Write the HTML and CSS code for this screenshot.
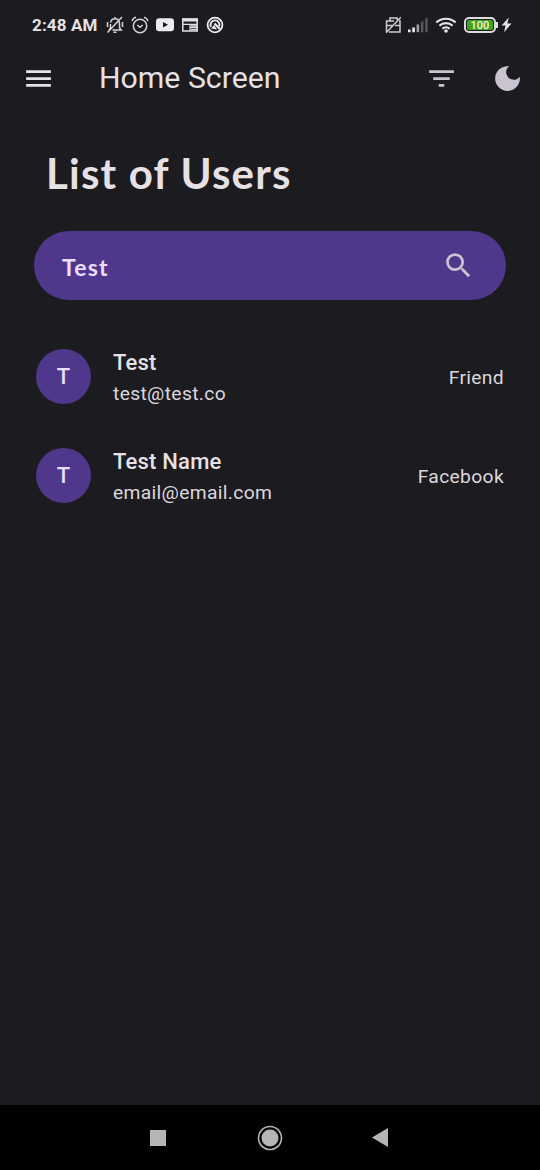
FILE: index.html
```html
<!DOCTYPE html>
<html lang="en">
<head>
<meta charset="utf-8">
<title>Home Screen</title>
<link rel="stylesheet" href="styles.css">
</head>
<body>
<div class="screen">
  <header class="status">
    <span class="clock">2:48 AM</span>
    <div class="notifications">
      <svg width="18" height="18" viewBox="0 0 18 18" fill="none" stroke="#d6d4d8" stroke-width="1.5"><path d="M4.500 6.500C5 4 7 2.700 9 2.700s4.500 1.300 4.500 5v4l1.700 2.300H6.500M4.500 8v4L3 14M9 1v2M7.500 16.200h3M16 1L1.500 16.500M1.500 6v5M16.500 6v5"/></svg>
      <svg width="18" height="18" viewBox="0 0 18 18" fill="none" stroke="#d6d4d8" stroke-width="1.5"><circle cx="9" cy="10" r="6.7"/><path d="M1 5q1-3 4-3.700M17 5q-1-3-4-3.700M6.300 9L9 11.300 11.700 9"/></svg>
      <svg width="18" height="18" viewBox="0 0 18 18"><rect y="2.3" width="18" height="13" rx="3.2" fill="#ecebed"/><path d="M7 6v5.600l5-2.800z" fill="#1c1b1f"/></svg>
      <svg class="news" width="16" height="18" viewBox="0 0 16 18" fill="none" stroke="#e4e2e6"><rect x=".8" y="3" width="14.4" height="12" stroke-width="1.5"/><path d="M0 4h16" stroke-width="3"/><path d="M1 8.300h14M8 8v7M8 11.700h7M9 13.500h6" stroke-width="1.2"/><path d="M9 10h6" stroke-width="1.5"/></svg>
      <svg width="18" height="18" viewBox="0 0 18 18" fill="none" stroke="#efedf0"><circle cx="9" cy="9" r="7.4" stroke-width="1.8"/><path d="M5 11A4.500 4.500 0 1 1 13.200 10.500" stroke-width="1.900"/><path d="M8.500 7.500l5.300 5.500" stroke-width="2.2"/><path d="M5 12.500l3-3.500 3 4.500z" fill="#efedf0" stroke="none"/></svg>
    </div>
    <div class="system">
      <svg width="17" height="18" viewBox="0 0 17 18" fill="none" stroke="#cfcdd1" stroke-width="1.5"><path d="M9 5H1.500v11M4 16h11V5h-1M5 5V2h7v2M2 9.500h6M10 9.500h5M15.800 1.200L1.200 16.800"/></svg>
      <svg width="20" height="18" viewBox="0 0 20 18"><path d="M0 13.500h2.600v2.700H0zM4.300 11.500h2.600v4.700H4.300z" fill="#eeecef"/><path d="M8.600 8.500h2.500v7.700H8.600z" fill="#a3a2a5"/><path d="M12.900 5.500h2.500v10.700h-2.500zM17.200 2.300h2.500v13.900h-2.500z" fill="#57565a"/></svg>
      <svg class="wifi" width="22" height="18" viewBox="0 0 22 18" fill="none" stroke="#e8e6ea" stroke-width="2.1"><path d="M1.300 6.600a14 14 0 0 1 19.400 0M4.400 9.800a9.600 9.600 0 0 1 13.200 0M7.400 12.800a5.200 5.200 0 0 1 7.200 0"/><circle cx="11" cy="15" r="1.8" fill="#e8e6ea" stroke="none"/></svg>
      <div class="battery"><span class="level">100</span></div>
      <svg class="bolt" width="11" height="18" viewBox="0 0 11 18"><path d="M7.800 1.500L.6 9.600h4L3 16.200 10.500 7.400H6.300z" fill="#e8e6ea"/></svg>
    </div>
  </header>

  <div class="appbar">
    <svg width="33" height="33" viewBox="0 0 24 24" fill="#e6e1e5"><path d="M3 18h18v-2H3v2zm0-5h18v-2H3v2zm0-7v2h18V6H3z"/></svg>
    <h1 class="title">Home Screen</h1>
    <svg class="filter" width="33" height="33" viewBox="0 0 24 24" fill="#cac4d0"><path d="M10 18h4v-2h-4v2zM3 6v2h18V6H3zm3 7h12v-2H6v2z"/></svg>
    <svg width="33" height="33" viewBox="0 0 24 24" fill="#cac4d0"><path d="M12 3a9 9 0 1 0 9 9c0-.46-.04-.92-.1-1.36a5.389 5.389 0 0 1-4.4 2.26 5.403 5.403 0 0 1-3.14-9.8c-.44-.06-.9-.1-1.36-.1z"/></svg>
  </div>

  <main class="content">
    <h2 class="heading">List of Users</h2>
    <div class="search">
      <span class="query">Test</span>
      <svg width="33" height="33" viewBox="0 0 24 24" fill="#cac4d0"><path d="M15.5 14h-.79l-.28-.27A6.471 6.471 0 0 0 16 9.500 6.500 6.500 0 1 0 9.500 16c1.610 0 3.090-.59 4.230-1.570l.27.28v.79l5 4.990L20.490 19l-4.990-5zm-6 0C7.010 14 5 11.990 5 9.500S7.010 5 9.500 5 14 7.010 14 9.500 11.990 14 9.500 14z"/></svg>
    </div>
    <ul class="users">
      <li class="user">
        <span class="avatar">T</span>
        <div class="info"><span class="name">Test</span><span class="email">test@test.co</span></div>
        <span class="tag">Friend</span>
      </li>
      <li class="user">
        <span class="avatar">T</span>
        <div class="info"><span class="name">Test Name</span><span class="email">email@email.com</span></div>
        <span class="tag">Facebook</span>
      </li>
    </ul>
  </main>

  <nav class="navbar">
    <svg width="16" height="16" viewBox="0 0 16 16"><path d="M0 0h16v16H0z" fill="#b5b5b5"/></svg>
    <svg class="home" width="26" height="26" viewBox="0 0 26 26"><circle cx="13" cy="13" r="11.500" fill="none" stroke="#b5b5b5" stroke-width="1.600"/><circle cx="13" cy="13" r="8.500" fill="#b5b5b5"/></svg>
    <svg width="16" height="19" viewBox="0 0 16 19"><path d="M16 0v19L0 9.500z" fill="#b5b5b5"/></svg>
  </nav>
</div>
</body>
</html>
```

FILE: styles.css
```css
* { box-sizing: border-box; }
body { margin: 0; background: #1c1b1f; }
svg { display: block; flex: none; }
.screen {
  display: flex;
  flex-direction: column;
  width: 540px;
  height: 1170px;
  background: #1c1b1f;
  color: #e6e1e5;
  font-family: Roboto, sans-serif;
}
.status {
  display: flex;
  align-items: center;
  height: 49px;
  padding: 0 28px 0 32px;
}
.clock {
  width: 74px;
  padding-top: 1px;
  font: 700 17px/20px Roboto, sans-serif;
  letter-spacing: .15px;
  white-space: nowrap;
}
.notifications { display: flex; gap: 7px; }
.news { margin: 0 1px; }
.system { display: flex; align-items: center; margin-left: auto; }
.system svg:first-child { margin-right: 6px; }
.wifi { margin: 0 7px; }
.battery {
  position: relative;
  width: 32px;
  height: 16px;
  padding: 1px;
  border: 2px solid #dddbdf;
  border-radius: 5px;
}
.battery::after {
  content: "";
  position: absolute;
  left: 30px;
  top: 3px;
  width: 2px;
  height: 6px;
  background: #dddbdf;
}
.level {
  display: block;
  height: 10px;
  border-radius: 2px;
  background: #43a31c;
  color: #f2f7ef;
  font: 500 11px/11px Roboto, sans-serif;
  text-align: center;
}
.bolt { margin-left: 5px; }
.appbar {
  display: flex;
  align-items: center;
  height: 58px;
  padding: 0 16.5px 0 22px;
}
.title {
  margin: 0 0 0 44px;
  font-size: 30.25px;
  font-weight: 400;
  line-height: 38px;
}
.filter { margin-left: auto; margin-right: 33px; }
.content { flex: 1; padding: 42px 34px 0; }
.heading {
  margin: -1px 0 0 12px;
  font: 700 42px/50px Lato, sans-serif;
  letter-spacing: 1.2px;
  white-space: nowrap;
}
.search {
  display: flex;
  align-items: center;
  justify-content: space-between;
  height: 69px;
  margin-top: 33px;
  padding: 0 31px 0 28px;
  border-radius: 35px;
  background: #4f378b;
}
.query {
  padding-top: 2px;
  font: 700 23px/30px Lato, sans-serif;
  letter-spacing: 1.2px;
  color: #eaddff;
}
.users { margin: 24px 0 0; padding: 0; list-style: none; }
.user { display: flex; align-items: center; height: 99px; padding: 6px 2px 0 2px; }
.avatar {
  flex: none;
  width: 55px;
  height: 55px;
  border-radius: 50%;
  background: #4f378b;
  color: #eaddff;
  font-size: 22px;
  font-weight: 500;
  line-height: 55px;
  text-align: center;
}
.info { display: flex; flex-direction: column; margin-left: 22px; padding-top: 3px; }
.name { margin-bottom: 1px; font-size: 22px; font-weight: 500; line-height: 31px; letter-spacing: .2px; }
.email, .tag { font-size: 19.25px; line-height: 30px; letter-spacing: .34px; color: #dcd8de; }
.tag { margin-left: auto; padding-top: 2px; }
.navbar {
  display: flex;
  align-items: center;
  justify-content: space-between;
  height: 65px;
  padding: 0 152px 0 150px;
  background: #000;
}
.home { margin-left: 2px; }
```
